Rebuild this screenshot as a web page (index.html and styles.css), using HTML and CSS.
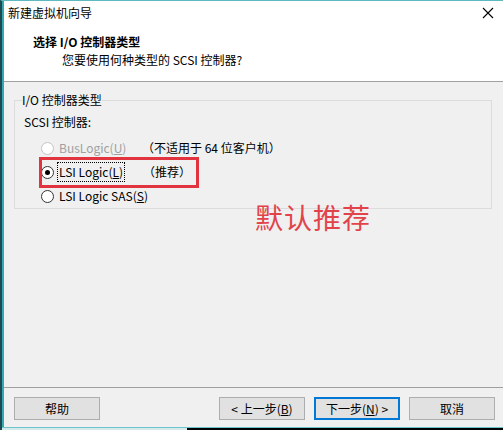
FILE: index.html
```html
<!DOCTYPE html>
<html>
<head>

    <meta charset="UTF-8">
    <title>新建虚拟机向导</title>

    <link rel="stylesheet" href="styles.css">

</head>
<body>

    <div class="window">
        <div class="frame">

            <div class="header">
                <div class="titlebar">
                    <span class="title">新建虚拟机向导</span>
                    <svg class="close" width="12" height="12" viewBox="0 0 12 12">
                        <path d="M1 1 L11 11 M11 1 L1 11" stroke="#000" stroke-width="1.1" fill="none"/>
                    </svg>
                </div>
                <div class="heading">选择 I/O 控制器类型</div>
                <div class="subheading">您要使用何种类型的 SCSI 控制器?</div>
            </div>

            <div class="content">

                <fieldset class="group">
                    <legend>I/O 控制器类型</legend>

                    <div class="group-label">SCSI 控制器:</div>

                    <div class="option disabled">
                        <span class="radio"></span>
                        <span class="name">BusLogic(<u>U</u>)</span>
                        <span class="note">（不适用于 64 位客户机）</span>
                    </div>

                    <div class="option marked">
                        <span class="radio checked"></span>
                        <span class="name focus">LSI Logic(<u>L</u>)</span>
                        <span class="note">（推荐）</span>
                        <span class="highlight"></span>
                    </div>

                    <div class="option">
                        <span class="radio"></span>
                        <span class="name">LSI Logic SAS(<u>S</u>)</span>
                    </div>
                </fieldset>

                <div class="annotation">默认推荐</div>

            </div>

            <div class="footer">
                <button class="btn">帮助</button>
                <button class="btn push">&lt; 上一步(<u>B</u>)</button>
                <button class="btn default">下一步(<u>N</u>) &gt;</button>
                <button class="btn">取消</button>
            </div>

        </div>
        <div class="bottom-edge">
            <span class="edge-light"></span>
            <span class="edge-dark"></span>
        </div>
    </div>

</body>
</html>
```

FILE: styles.css
```css
html {
    box-sizing: border-box;
}

*,
*:before,
*:after {
    box-sizing: inherit;
}

body {
    margin: 0;
    width: 503px;
    height: 430px;
    overflow: hidden;
    font-family: "Noto Sans CJK SC", "Noto Sans", sans-serif;
    font-size: 12px;
    line-height: 16px;
    color: #000;
    background: #f0f0f0;
}

.window {
    display: flex;
    flex-direction: column;
    height: 430px;
    border-top: 1px solid #5fb9c1;
    border-left: 2px solid #1d4a50;
}

.frame {
    flex: 1;
    display: flex;
    flex-direction: column;
    border-left: 2px solid #34a7b0;
}

/* header */

.header {
    height: 81px;
    background: #fff;
    border-bottom: 1px solid #a0a0a0;
}

.titlebar {
    display: flex;
    align-items: center;
    justify-content: space-between;
    height: 24px;
    padding: 0 9px 0 4px;
}

.close {
    display: block;
}

.heading {
    margin: 9px 0 0 29px;
    font-weight: bold;
}

.subheading {
    margin: 2px 0 0 58px;
}

/* content */

.content {
    position: relative;
    flex: 1;
}

.group {
    margin: 10px 11px 0 10px;
    padding: 0 0 0 9px;
    border: 1px solid #dcdcdc;
}

.group legend {
    margin-left: -2px;
    padding: 0;
}

.group-label {
    margin: 6px 0 6px;
}

.option {
    position: relative;
    display: flex;
    align-items: center;
    height: 24px;
    padding-left: 17px;
    white-space: nowrap;
}

.radio {
    flex: none;
    width: 13px;
    height: 13px;
    margin-right: 3px;
    border: 1px solid #333;
    border-radius: 50%;
    background: #fff;
    display: flex;
    align-items: center;
    justify-content: center;
}

.radio.checked:after {
    content: "";
    width: 5px;
    height: 5px;
    border-radius: 50%;
    background: #000;
}

.name {
    min-width: 85px;
    padding: 1px 1px;
    border: 1px dotted transparent;
}

.name.focus {
    min-width: 0;
    margin-right: 18px;
    border-color: #000;
}

.disabled {
    color: #a0a0a0;
}

.disabled .radio {
    border-color: #c4c4c4;
}

.disabled .note {
    color: #000;
}

.highlight {
    position: absolute;
    left: 15px;
    top: -3px;
    width: 160px;
    height: 31px;
    border: 3px solid #e2343e;
}

.annotation {
    position: absolute;
    left: 251px;
    top: 120px;
    font-size: 28px;
    line-height: 30px;
    color: #e2434b;
    letter-spacing: 1px;
}

/* footer */

.footer {
    display: flex;
    gap: 9px;
    height: 40px;
    padding: 9px 8px 0 10px;
    border-top: 1px solid #a0a0a0;
}

.btn {
    width: 86px;
    height: 23px;
    padding: 0;
    font-family: inherit;
    font-size: 12px;
    color: #000;
    background: #e1e1e1;
    border: 1px solid #adadad;
    border-radius: 0;
}

.push {
    margin-left: auto;
}

.default {
    border-color: #0078d7;
    box-shadow: inset 0 0 0 1px #0078d7;
}

.bottom-edge {
    display: flex;
    height: 3px;
    border-top: 1px solid #6cc3c9;
}

.edge-light {
    width: 185px;
    background: #d6eaec;
}

.edge-dark {
    flex: 1;
    background: #000;
}
```
